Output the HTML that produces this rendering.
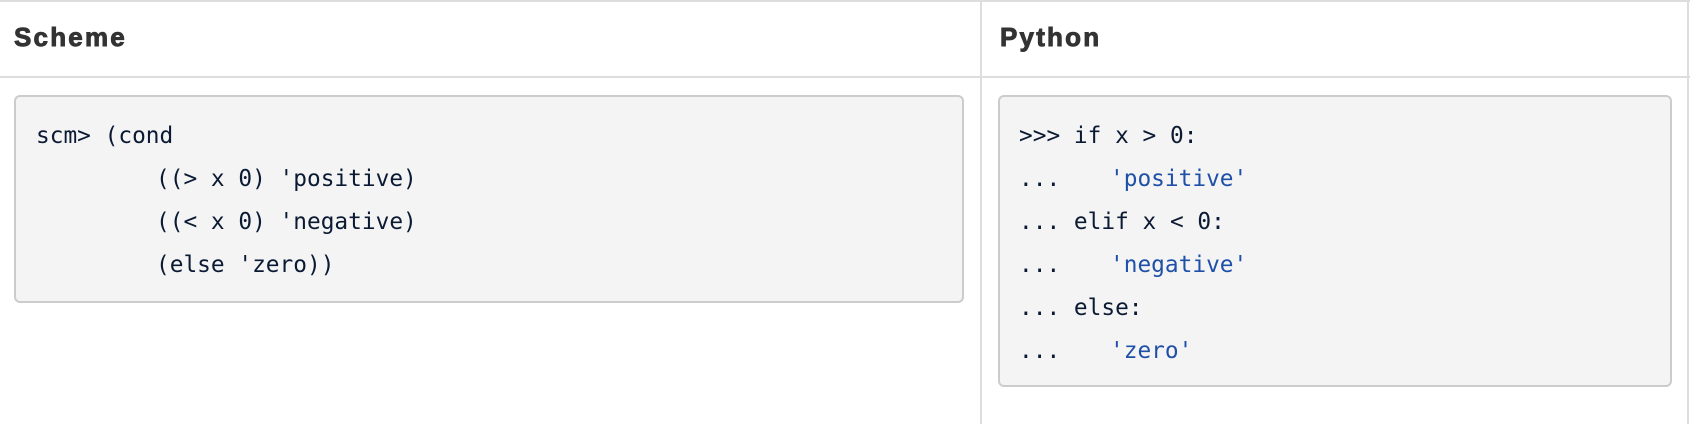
<!DOCTYPE html>
<html><head><meta charset="utf-8"><style>
html,body{margin:0;padding:0;background:#fff;width:1690px;height:424px;overflow:hidden;position:relative}
.l{position:absolute;background:#ddd}
h{position:absolute;font-family:"Liberation Sans",sans-serif;font-weight:bold;font-size:26px;color:#333;letter-spacing:2.2px;-webkit-text-stroke:0.9px #333}
.box{position:absolute;background:#f4f4f4;border:2px solid #ccc;border-radius:6px;box-sizing:border-box}
.c{position:absolute;white-space:pre;font-family:"DejaVu Sans Mono","Liberation Mono",monospace;font-size:22.8px;line-height:43px;color:#0b1a33}
.s{color:#1f50a8}
</style></head><body>
<div class="l" style="left:0;top:0;width:1690px;height:2px"></div>
<div class="l" style="left:0;top:76px;width:1690px;height:2px"></div>
<div class="l" style="left:980px;top:0;width:2px;height:424px"></div>
<div class="l" style="left:1687px;top:0;width:2px;height:424px"></div>
<h style="left:14px;top:22px">Scheme</h>
<h style="left:1000px;top:22px">Python</h>
<div class="box" style="left:14px;top:95px;width:950px;height:208px"></div>
<div class="box" style="left:998px;top:95px;width:674px;height:292px"></div>
<div class="c" style="left:36px;top:115px">scm&gt; (cond</div>
<div class="c" style="left:156px;top:158px">((&gt; x 0) 'positive)</div>
<div class="c" style="left:156px;top:201px">((&lt; x 0) 'negative)</div>
<div class="c" style="left:156px;top:244px">(else 'zero))</div>
<div class="c" style="left:1019px;top:115px">&gt;&gt;&gt; if x &gt; 0:</div>
<div class="c" style="left:1019px;top:158px">...</div><div class="c s" style="left:1110px;top:158px">'positive'</div>
<div class="c" style="left:1019px;top:201px">... elif x &lt; 0:</div>
<div class="c" style="left:1019px;top:244px">...</div><div class="c s" style="left:1110px;top:244px">'negative'</div>
<div class="c" style="left:1019px;top:287px">... else:</div>
<div class="c" style="left:1019px;top:330px">...</div><div class="c s" style="left:1110px;top:330px">'zero'</div>
</body></html>
